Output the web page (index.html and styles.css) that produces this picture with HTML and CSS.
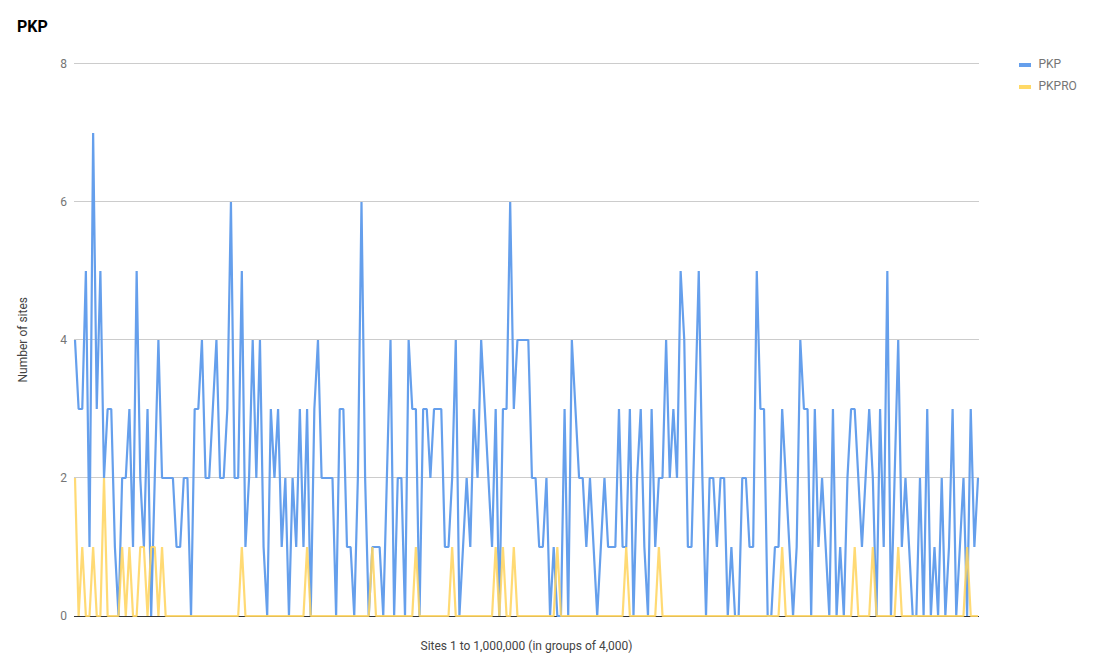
FILE: index.html
```html
<!DOCTYPE html>
<html lang="en">
<head>
<meta charset="utf-8">
<title>PKP</title>
<link rel="stylesheet" href="styles.css">
</head>
<body>
<main class="chart">
  <h1 class="title">PKP</h1>
  <div class="chart-body">
    <div class="y-title"><span>Number of sites</span></div>
    <div class="ticks">
      <span>8</span><span>6</span><span>4</span><span>2</span><span>0</span>
    </div>
    <svg class="plot" viewBox="0 0 249 8" preserveAspectRatio="none" role="img" aria-label="Line chart">
      <g class="grid">
        <line x1="-0.28" x2="249.28" y1="-0.00725" y2="-0.00725"/>
        <line x1="-0.28" x2="249.28" y1="1.99275" y2="1.99275"/>
        <line x1="-0.28" x2="249.28" y1="3.99275" y2="3.99275"/>
        <line x1="-0.28" x2="249.28" y1="5.99275" y2="5.99275"/>
      </g>
      <line class="baseline" x1="-0.28" x2="249.28" y1="8.00725" y2="8.00725"/>
      <g transform="translate(0 8) scale(1 -1)">
        <polyline class="series series-pkp" points="0,4 1,3 2,3 3,5 4,1 5,7 6,3 7,5 8,2 9,3 10,3 11,1 12,0 13,2 14,2 15,3 16,1 17,5 18,2 19,1 20,3 21,0 22,2 23,4 24,2 25,2 26,2 27,2 28,1 29,1 30,2 31,2 32,0 33,3 34,3 35,4 36,2 37,2 38,3 39,4 40,2 41,2 42,3 43,6 44,2 45,2 46,5 47,1 48,2 49,4 50,2 51,4 52,1 53,0 54,3 55,2 56,3 57,1 58,2 59,0 60,2 61,1 62,3 63,1 64,3 65,0 66,3 67,4 68,2 69,2 70,2 71,2 72,0 73,3 74,3 75,1 76,1 77,0 78,2 79,6 80,2 81,0 82,1 83,1 84,1 85,0 86,2 87,4 88,0 89,2 90,2 91,0 92,4 93,3 94,3 95,0 96,3 97,3 98,2 99,3 100,3 101,3 102,1 103,1 104,2 105,4 106,0 107,1 108,2 109,1 110,3 111,2 112,4 113,3 114,2 115,1 116,3 117,0 118,3 119,3 120,6 121,3 122,4 123,4 124,4 125,4 126,2 127,2 128,1 129,1 130,2 131,0 132,1 133,0 134,0 135,3 136,0 137,4 138,3 139,2 140,2 141,1 142,2 143,1 144,0 145,1 146,2 147,1 148,1 149,1 150,3 151,1 152,1 153,3 154,0 155,2 156,3 157,1 158,0 159,3 160,1 161,2 162,2 163,4 164,2 165,3 166,2 167,5 168,4 169,1 170,1 171,3 172,5 173,2 174,0 175,2 176,2 177,1 178,2 179,2 180,0 181,1 182,0 183,0 184,2 185,2 186,1 187,1 188,5 189,3 190,3 191,0 192,0 193,1 194,1 195,3 196,2 197,1 198,0 199,1 200,4 201,3 202,3 203,0 204,3 205,1 206,2 207,1 208,0 209,3 210,0 211,1 212,0 213,2 214,3 215,3 216,2 217,1 218,2 219,3 220,2 221,0 222,3 223,1 224,5 225,0 226,2 227,4 228,1 229,2 230,1 231,0 232,0 233,2 234,0 235,3 236,0 237,1 238,0 239,2 240,0 241,1 242,3 243,0 244,1 245,2 246,0 247,3 248,1 249,2"/>
        <polyline class="series series-pkpro" points="0,2 1,0 2,1 3,0 4,0 5,1 6,0 7,0 8,2 9,0 12,0 13,1 14,0 15,1 16,0 17,0 18,1 19,1 20,0 21,1 22,1 23,0 24,1 25,0 45,0 46,1 47,0 63,0 64,1 65,0 81,0 82,1 83,0 93,0 94,1 95,0 103,0 104,1 105,0 115,0 116,1 117,0 118,1 119,0 120,0 121,1 122,0 132,0 133,1 134,0 151,0 152,1 153,0 160,0 161,1 162,0 194,0 195,1 196,0 214,0 215,1 216,0 219,0 220,1 221,0 226,0 227,1 228,0 245,0 246,1 247,0 249,0"/>
      </g>
    </svg>
    <ul class="legend">
      <li class="legend-item"><i class="swatch swatch-pkp"></i>PKP</li>
      <li class="legend-item"><i class="swatch swatch-pkpro"></i>PKPRO</li>
    </ul>
  </div>
  <p class="x-title">Sites 1 to 1,000,000 (in groups of 4,000)</p>
</main>
</body>
</html>
```

FILE: styles.css
```css
* { box-sizing: border-box; }

html, body {
  margin: 0;
  background: #fff;
}

.chart {
  width: 1102px;
  height: 670px;
  overflow: hidden;
  font-family: Roboto, "Liberation Sans", sans-serif;
  color: #757575;
  font-size: 12px;
}

.title {
  margin: 0;
  padding: 17px 0 0 17px;
  height: 64px;
  font-size: 16px;
  line-height: 19px;
  font-weight: 700;
  color: #000;
}

.chart-body {
  display: flex;
  align-items: flex-start;
  height: 552px;
}

.y-title {
  width: 32px;
  height: 552px;
  padding-left: 16px;
  display: flex;
  align-items: center;
  color: #444;
}

.y-title span {
  writing-mode: vertical-rl;
  transform: rotate(180deg);
  line-height: 14px;
}

.ticks {
  width: 35px;
  height: 566px;
  margin-top: -7px;
  display: flex;
  flex-direction: column;
  justify-content: space-between;
  align-items: flex-end;
  line-height: 14px;
}

.plot {
  width: 903px;
  height: 552px;
  margin-left: 8px;
  flex: none;
  overflow: visible;
}

.grid line {
  stroke: #ccc;
  stroke-width: 1;
  vector-effect: non-scaling-stroke;
}

.baseline {
  stroke: #333;
  stroke-width: 1;
  vector-effect: non-scaling-stroke;
}

.series {
  fill: none;
  stroke-width: 2.2;
  stroke-linejoin: bevel;
  vector-effect: non-scaling-stroke;
}

.series-pkp { stroke: #659fec; }
.series-pkpro { stroke: #ffd55f; stroke-opacity: 0.87; }

.legend {
  list-style: none;
  margin: -7px 0 0 40.5px;
  padding: 0;
  display: flex;
  flex-direction: column;
  gap: 8px;
}

.legend-item {
  display: flex;
  align-items: center;
  gap: 8px;
  line-height: 14px;
}

.swatch {
  width: 12px;
  height: 4px;
  margin-top: 1px;
}

.swatch-pkp { background: #659fec; }
.swatch-pkpro { background: #ffd966; }

.x-title {
  margin: 23px 0 0;
  width: 1053px;
  text-align: center;
  line-height: 14px;
  color: #444;
}
```
